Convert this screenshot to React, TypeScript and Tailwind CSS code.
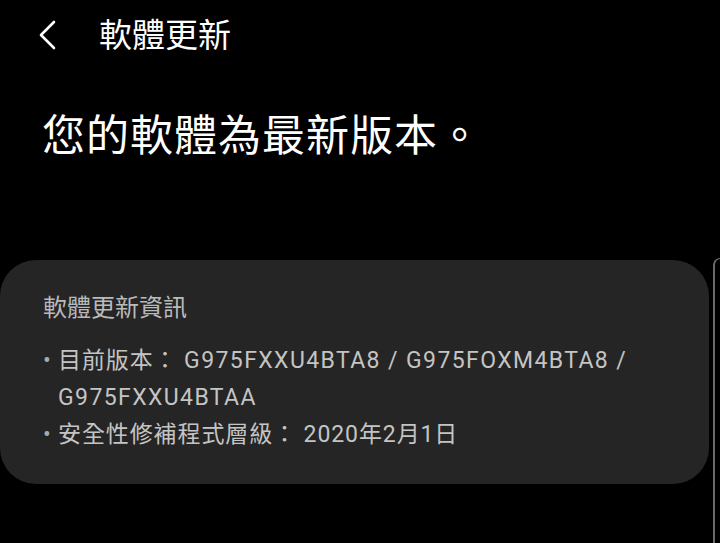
import React from 'react';

const font = { fontFamily: 'Roboto, "Noto Sans CJK TC", sans-serif' };

function BackIcon() {
  return (
    <svg width="24" height="34" viewBox="0 0 24 34" fill="none">
      <path d="M17 4 L4 17 L17 30" stroke="#fff" strokeWidth="2.6" strokeLinecap="round" strokeLinejoin="round" />
    </svg>
  );
}

function Bullet({ children }: { children: React.ReactNode }) {
  return (
    <div className="flex">
      <span className="w-[15px] shrink-0 text-[#aaa]">•</span>
      <span>{children}</span>
    </div>
  );
}

export default function App() {
  return (
    <div className="w-[720px] h-[543px] bg-black overflow-hidden flex flex-col" style={font}>
      <div className="h-[70px] flex items-center pl-[37px]">
        <BackIcon />
        <span className="ml-[38px] text-white text-[33px] leading-none">軟體更新</span>
      </div>
      <div className="pl-[42px] pt-[45px] text-white text-[43px] leading-none tracking-[1px]">
        您的軟體為最新版本。
      </div>
      <div className="flex flex-1 mt-[102px] gap-[4px]">
        <div className="w-[709px] h-[224px] shrink-0 bg-[#252525] rounded-[36px] pl-[43px] pt-[36px] text-[#c4c4c4]">
          <div className="text-[24px] leading-none text-[#bababa]">軟體更新資訊</div>
          <div className="mt-[22px] text-[23px] leading-[37px] tracking-[0.9px]">
            <Bullet>
              目前版本： <span className="tracking-[1.4px]">G975FXXU4BTA8 / G975FOXM4BTA8 /</span>
              <br />
              <span className="tracking-[1.4px]">G975FXXU4BTAA</span>
            </Bullet>
            <Bullet>安全性修補程式層級： 2020年2月1日</Bullet>
          </div>
        </div>
        <div className="flex-1 mt-[-2px] border-l-2 border-t border-[#6a6a6a] rounded-tl-[10px]" />
      </div>
    </div>
  );
}
